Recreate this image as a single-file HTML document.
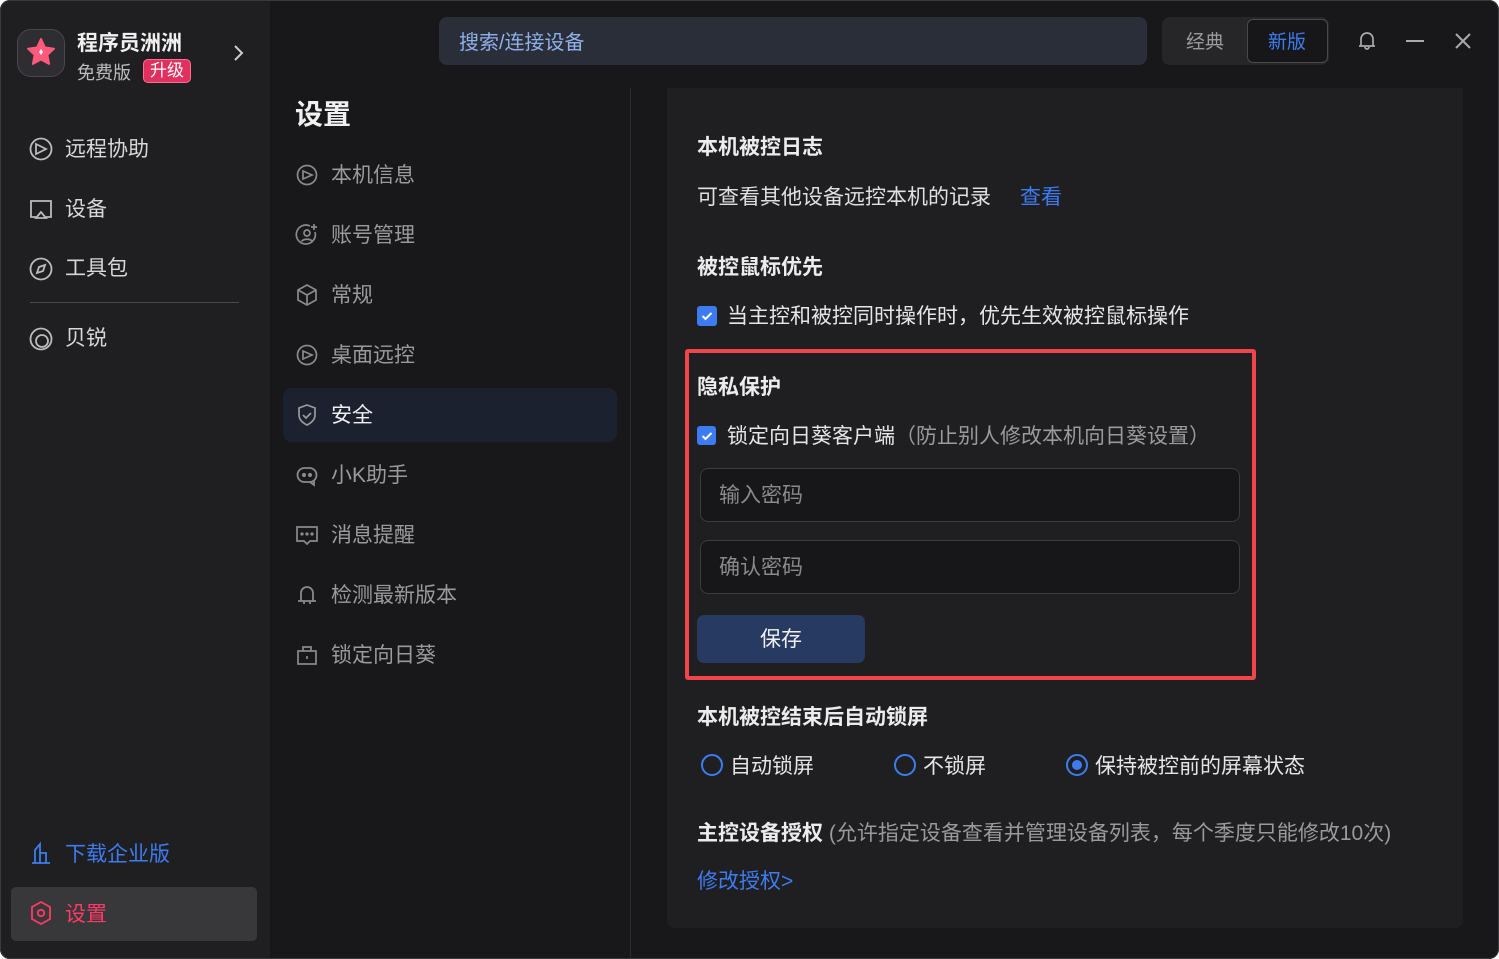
<!DOCTYPE html>
<html><head><meta charset="utf-8">
<style>
*{margin:0;padding:0;box-sizing:border-box}
body{width:1499px;height:959px;background:#fff;overflow:hidden;font-family:"Liberation Sans","Noto Sans CJK SC",sans-serif;position:relative}
.win{position:absolute;left:0;top:0;width:1499px;height:959px;background:#18181b;border-radius:10px;overflow:hidden}
.frame{position:absolute;left:0;top:0;width:1499px;height:959px;border:1px solid #3a3a3e;border-radius:10px;pointer-events:none}
.a{position:absolute;white-space:nowrap}
.side{position:absolute;left:0;top:0;width:270px;height:959px;background:#1f1f22}
.t{font-size:21px;color:#d8d8d8}
.g{color:#9a9a9a}
.h{font-size:21px;font-weight:bold;color:#ececec}
svg{position:absolute}
.inp{position:absolute;left:700px;width:540px;height:54px;border:1px solid #3c3c40;border-radius:8px;background:#17171a;font-size:21px;color:#8a8a8a;padding:10px 18px}
.cb{position:absolute;width:20px;height:20px;background:#3d7cf0;border-radius:3px}
.rad{position:absolute;width:22px;height:22px;border:2.5px solid #3d7cf0;border-radius:50%}
</style></head><body>
<div class="win">
<div class="side"></div>
<div class="a" style="left:17px;top:29px;width:48px;height:48px;border-radius:14px;background:#2e2e32;border:1px solid #48484c"></div>
<svg style="left:25px;top:36px" width="32" height="32" viewBox="0 0 32 32"><path d="M16 3l4 8.5 9 1.2-6.6 6.2 1.7 9L16 23.5 7.9 27.9l1.7-9L3 12.7l9-1.2z" fill="#ff5a7a" stroke="#ff5a7a" stroke-linejoin="round" stroke-width="2"/><path d="M16 13l2 3-2 3-2-3z" fill="#fff"/></svg>
<div class="a" style="left:77px;top:27px;font-size:21px;font-weight:bold;color:#f0f0f0">程序员洲洲</div>
<div class="a" style="left:77px;top:59px;font-size:18px;color:#bdbdbd">免费版</div>
<div class="a" style="left:143px;top:59px;height:24px;padding:0 6px;background:#e0305e;border:1px solid #ff6f90;border-radius:5px;font-size:17px;color:#fff;line-height:22px">升级</div>
<svg style="left:231px;top:44px" width="14" height="18" viewBox="0 0 14 18"><path d="M4 2l7 7-7 7" stroke="#ccc" stroke-width="2" fill="none"/></svg>
<svg style="left:28px;top:136px" width="26" height="26" viewBox="0 0 26 26" fill="none" stroke="#bbb" stroke-width="1.8"><circle cx="13" cy="13" r="10.5"/><path d="M8 8l10 5-10 5z"/></svg>
<div class="a t" style="left:65px;top:133px">远程协助</div>
<svg style="left:28px;top:197px" width="26" height="26" viewBox="0 0 26 26" fill="none" stroke="#bbb" stroke-width="1.8"><path d="M8 20H3V4h20v16h-5"/><path d="M13 15l-5 6h10z"/></svg>
<div class="a t" style="left:65px;top:193px">设备</div>
<svg style="left:28px;top:256px" width="26" height="26" viewBox="0 0 26 26" fill="none" stroke="#bbb" stroke-width="1.8"><circle cx="13" cy="13" r="10.5"/><path d="M17 9l-6 2-2 6 6-2z"/></svg>
<div class="a t" style="left:65px;top:252px">工具包</div>
<div class="a" style="left:30px;top:302px;width:209px;height:1px;background:#4a4a4e"></div>
<svg style="left:28px;top:326px" width="26" height="26" viewBox="0 0 26 26" fill="none" stroke="#bbb" stroke-width="1.8"><circle cx="13" cy="13" r="10.5"/><circle cx="14" cy="15" r="6"/></svg>
<div class="a t" style="left:65px;top:322px">贝锐</div>
<svg style="left:30px;top:841px" width="22" height="24" viewBox="0 0 22 24" fill="none" stroke="#3d7cf0" stroke-width="1.8"><path d="M2 22h18M5 22V9l5-6v19M10 12h6v10"/></svg>
<div class="a t" style="left:65px;top:838px;color:#3d7cf0">下载企业版</div>
<div class="a" style="left:11px;top:887px;width:246px;height:54px;background:#38383b;border-radius:5px"></div>
<svg style="left:29px;top:900px" width="24" height="26" viewBox="0 0 24 26" fill="none" stroke="#ff3a66" stroke-width="1.8"><path d="M12 2l9 5v12l-9 5-9-5V7z"/><circle cx="12" cy="13" r="3.2"/></svg>
<div class="a t" style="left:65px;top:898px;color:#ff3a66">设置</div>

<div class="a" style="left:630px;top:88px;width:1px;height:871px;background:#2c2c30"></div>
<div class="a" style="left:295px;top:93px;font-size:28px;font-weight:bold;color:#f0f0f0">设置</div>
<div class="a" style="left:283px;top:388px;width:334px;height:54px;background:#1c2130;border-radius:9px"></div>
<svg style="left:295px;top:163px" width="24" height="24" viewBox="0 0 24 24" fill="none" stroke="#8a8a8a" stroke-width="1.7"><circle cx="12" cy="12" r="9.5"/><path d="M8 8l9 4-9 4z"/></svg>
<div class="a t g" style="left:331px;top:159px">本机信息</div>
<svg style="left:295px;top:223px" width="24" height="24" viewBox="0 0 24 24" fill="none" stroke="#8a8a8a" stroke-width="1.7"><path d="M20 9a9.5 9.5 0 1 1-5-6"/><circle cx="12" cy="10" r="3"/><path d="M6.5 18.5c2-3 9-3 11 0M19 1v6M16 4h6"/></svg>
<div class="a t g" style="left:331px;top:219px">账号管理</div>
<svg style="left:295px;top:283px" width="24" height="24" viewBox="0 0 24 24" fill="none" stroke="#8a8a8a" stroke-width="1.7"><path d="M12 2l9 5v10l-9 5-9-5V7zM3 7l9 5 9-5M12 12v10"/></svg>
<div class="a t g" style="left:331px;top:279px">常规</div>
<svg style="left:295px;top:343px" width="24" height="24" viewBox="0 0 24 24" fill="none" stroke="#8a8a8a" stroke-width="1.7"><circle cx="12" cy="12" r="9.5"/><path d="M8 8l9 4-9 4z"/></svg>
<div class="a t g" style="left:331px;top:339px">桌面远控</div>
<svg style="left:295px;top:403px" width="24" height="24" viewBox="0 0 24 24" fill="none" stroke="#9a9a9a" stroke-width="1.7"><path d="M12 2l8 3v7c0 5-4 8-8 10-4-2-8-5-8-10V5z"/><path d="M8 12l3 3 5-5"/></svg>
<div class="a t" style="left:331px;top:399px;color:#f0f0f0">安全</div>
<svg style="left:295px;top:463px" width="24" height="24" viewBox="0 0 24 24" fill="none" stroke="#8a8a8a" stroke-width="1.8"><rect x="2.5" y="5" width="19" height="14" rx="7"/><path d="M15 19l4 3v-5"/><circle cx="9" cy="12" r="1.2" fill="#8a8a8a"/><circle cx="15" cy="12" r="1.2" fill="#8a8a8a"/></svg>
<div class="a t g" style="left:331px;top:459px">小K助手</div>
<svg style="left:295px;top:523px" width="24" height="24" viewBox="0 0 24 24" fill="none" stroke="#8a8a8a" stroke-width="1.7"><path d="M2 4h20v14h-7l-3 3-3-3H2z"/><circle cx="7" cy="11" r=".8" fill="#8a8a8a"/><circle cx="12" cy="11" r=".8" fill="#8a8a8a"/><circle cx="17" cy="11" r=".8" fill="#8a8a8a"/></svg>
<div class="a t g" style="left:331px;top:519px">消息提醒</div>
<svg style="left:295px;top:583px" width="24" height="24" viewBox="0 0 24 24" fill="none" stroke="#8a8a8a" stroke-width="1.8"><path d="M6 18V10a6 6 0 0 1 12 0v8M3 18h18M9 18v3M15 18v3"/></svg>
<div class="a t g" style="left:331px;top:579px">检测最新版本</div>
<svg style="left:295px;top:643px" width="24" height="24" viewBox="0 0 24 24" fill="none" stroke="#8a8a8a" stroke-width="1.7"><rect x="3" y="8" width="18" height="13"/><path d="M8 8V4h8v4M12 13v3"/></svg>
<div class="a t g" style="left:331px;top:639px">锁定向日葵</div>

<div class="a" style="left:439px;top:17px;width:708px;height:48px;background:#2a2e39;border-radius:8px"></div>
<div class="a" style="left:459px;top:26px;font-size:20px;color:#8fb0ea">搜索/连接设备</div>
<div class="a" style="left:1162px;top:17px;width:167px;height:48px;background:#262628;border-radius:8px"></div>
<div class="a" style="left:1186px;top:27px;font-size:19px;color:#9a9a9a">经典</div>
<div class="a" style="left:1247px;top:19px;width:81px;height:44px;background:#17171a;border:1px solid #4a4a4e;border-radius:6px"></div>
<div class="a" style="left:1268px;top:27px;font-size:19px;color:#3d7cf0">新版</div>
<svg style="left:1356px;top:30px" width="22" height="22" viewBox="0 0 22 22" fill="none" stroke="#aaa" stroke-width="1.7"><path d="M5 16V9a6 6 0 0 1 12 0v7zM3 16h16M9 17a2 2 0 0 0 4 0"/></svg>
<div class="a" style="left:1406px;top:40px;width:18px;height:2px;background:#aaa"></div>
<svg style="left:1454px;top:32px" width="18" height="18" viewBox="0 0 18 18" stroke="#aaa" stroke-width="2"><path d="M2 2l14 14M16 2L2 16"/></svg>

<div class="a" style="left:667px;top:88px;width:796px;height:840px;background:#1f1f22;border-radius:0 0 8px 8px"></div>
<div class="a h" style="left:697px;top:131px">本机被控日志</div>
<div class="a t" style="left:697px;top:181px;color:#e0e0e0">可查看其他设备远控本机的记录</div>
<div class="a t" style="left:1020px;top:181px;color:#3d7cf0">查看</div>
<div class="a h" style="left:697px;top:251px">被控鼠标优先</div>
<div class="cb" style="left:697px;top:306px"></div>
<svg style="left:700px;top:309px" width="14" height="14" viewBox="0 0 14 14"><path d="M2.5 7l3 3 6-6" stroke="#fff" stroke-width="2" fill="none"/></svg>
<div class="a t" style="left:727px;top:300px;color:#e6e6e6">当主控和被控同时操作时，优先生效被控鼠标操作</div>
<div class="a" style="left:685px;top:349px;width:571px;height:331px;border:4px solid #f0464b;border-radius:3px"></div>
<div class="a h" style="left:697px;top:371px">隐私保护</div>
<div class="cb" style="left:697px;top:426px;width:19px;height:19px"></div>
<svg style="left:700px;top:429px" width="14" height="14" viewBox="0 0 14 14"><path d="M2.5 7l3 3 6-6" stroke="#fff" stroke-width="2" fill="none"/></svg>
<div class="a t" style="left:727px;top:420px;color:#e6e6e6">锁定向日葵客户端<span style="color:#9a9a9a">（防止别人修改本机向日葵设置）</span></div>
<div class="inp" style="top:468px">输入密码</div>
<div class="inp" style="top:540px">确认密码</div>
<div class="a" style="left:697px;top:615px;width:168px;height:48px;background:#273a62;border-radius:7px;font-size:21px;color:#f0f0f0;text-align:center;line-height:50px">保存</div>
<div class="a h" style="left:697px;top:701px">本机被控结束后自动锁屏</div>
<div class="rad" style="left:701px;top:754px"></div>
<div class="a t" style="left:730px;top:750px;color:#e6e6e6">自动锁屏</div>
<div class="rad" style="left:894px;top:754px"></div>
<div class="a t" style="left:923px;top:750px;color:#e6e6e6">不锁屏</div>
<div class="rad" style="left:1066px;top:754px"></div>
<div class="a" style="left:1072px;top:760px;width:10px;height:10px;border-radius:50%;background:#3d7cf0"></div>
<div class="a t" style="left:1095px;top:750px;color:#e6e6e6">保持被控前的屏幕状态</div>
<div class="a h" style="left:697px;top:817px">主控设备授权 <span style="font-weight:normal;color:#9a9a9a">(允许指定设备查看并管理设备列表，每个季度只能修改10次)</span></div>
<div class="a t" style="left:697px;top:865px;color:#3d7cf0">修改授权&gt;</div>
</div>
<div class="frame"></div>
</body></html>
